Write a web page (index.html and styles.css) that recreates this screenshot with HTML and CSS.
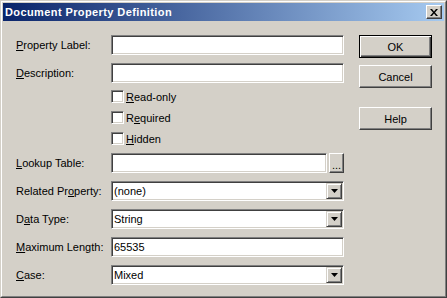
FILE: index.html
```html
<!DOCTYPE html>
<html lang="en">
<head>
  <meta charset="UTF-8">
  <title>Document Property Definition</title>
  <link rel="stylesheet" href="styles.css">
</head>
<body>
<div class="window">
  <div class="window-inner">
    <div class="titlebar">
      <span class="title">Document Property Definition</span>
      <div class="close">
        <svg width="8" height="7" viewBox="0 0 8 7"><path d="M0 0h2l2 2.5L6 0h2L5 3.5 8 7H6L4 4.5 2 7H0l3-3.5z" fill="#000"/></svg>
      </div>
    </div>
    <div class="client">
      <div class="form">
        <div class="row">
          <span class="label"><u>P</u>roperty Label:</span>
          <div class="field"></div>
        </div>
        <div class="row">
          <span class="label"><u>D</u>escription:</span>
          <div class="field"></div>
        </div>
        <div class="check-row first">
          <span class="check"></span><span><u>R</u>ead-only</span>
        </div>
        <div class="check-row">
          <span class="check"></span><span>R<u>e</u>quired</span>
        </div>
        <div class="check-row">
          <span class="check"></span><span><u>H</u>idden</span>
        </div>
        <div class="row">
          <span class="label"><u>L</u>ookup Table:</span>
          <div class="lookup">
            <div class="field short"></div>
            <div class="dots">...</div>
          </div>
        </div>
        <div class="row">
          <span class="label">Related Pr<u>o</u>perty:</span>
          <div class="field combo"><span class="value">(none)</span><span class="drop"><svg width="7" height="4" viewBox="0 0 7 4"><path d="M0 0h7L3.5 4z" fill="#000"/></svg></span></div>
        </div>
        <div class="row">
          <span class="label">D<u>a</u>ta Type:</span>
          <div class="field combo"><span class="value">String</span><span class="drop"><svg width="7" height="4" viewBox="0 0 7 4"><path d="M0 0h7L3.5 4z" fill="#000"/></svg></span></div>
        </div>
        <div class="row">
          <span class="label"><u>M</u>aximum Length:</span>
          <div class="field"><span class="value">65535</span></div>
        </div>
        <div class="row">
          <span class="label"><u>C</u>ase:</span>
          <div class="field combo"><span class="value">Mixed</span><span class="drop"><svg width="7" height="4" viewBox="0 0 7 4"><path d="M0 0h7L3.5 4z" fill="#000"/></svg></span></div>
        </div>
      </div>
      <div class="buttons">
        <div class="btn default"><span>OK</span></div>
        <div class="btn">Cancel</div>
        <div class="btn help">Help</div>
      </div>
    </div>
  </div>
</div>
</body>
</html>
```

FILE: styles.css
```css
html, body {
  margin: 0;
  background-color: #d4d0c8;
}
body {
  font-family: "Liberation Sans", Arial, sans-serif;
  font-size: 11px;
  color: #000;
}
.window {
  width: 447px;
  height: 298px;
  box-sizing: border-box;
  border: 1px solid;
  border-color: #d4d0c8 #404040 #404040 #d4d0c8;
  display: flex;
  flex-direction: column;
}
.window-inner {
  flex: 1;
  border: 1px solid;
  border-color: #fff #808080 #808080 #fff;
  padding: 1px;
  display: flex;
  flex-direction: column;
}
.titlebar {
  height: 18px;
  flex: none;
  padding: 0 2px;
  display: flex;
  align-items: center;
  justify-content: space-between;
  background: linear-gradient(to right, #0a246a, #a6caf0);
  color: #fff;
  font-weight: bold;
  font-size: 11px;
  letter-spacing: 0.4px;
}
.close {
  width: 16px;
  height: 14px;
  box-sizing: border-box;
  background-color: #d4d0c8;
  border: 1px solid;
  border-color: #fff #404040 #404040 #fff;
  box-shadow: inset -1px -1px #808080;
  display: flex;
  align-items: center;
  justify-content: center;
}
.client {
  flex: 1;
  display: flex;
  gap: 15px;
  padding: 14px 11px 0 13px;
}
.form {
  width: 328px;
  display: flex;
  flex-direction: column;
  gap: 8px;
}
.row {
  height: 20px;
  display: flex;
  align-items: center;
}
.label {
  width: 95px;
  flex: none;
}
.field {
  width: 233px;
  height: 20px;
  box-sizing: border-box;
  background-color: #fff;
  border: 1px solid;
  border-color: #808080 #fff #fff #808080;
  box-shadow: inset 1px 1px #404040, inset -1px -1px #d4d0c8;
  display: flex;
  align-items: center;
  padding: 0 1px 0 2px;
}
.field.short {
  width: 216px;
}
.lookup {
  display: flex;
  gap: 2px;
}
.dots {
  width: 15px;
  height: 20px;
  box-sizing: border-box;
  border: 1px solid;
  border-color: #fff #404040 #404040 #fff;
  box-shadow: inset -1px -1px #808080;
  text-align: center;
  line-height: 22px;
  font-size: 11px;
}
.combo .value {
  flex: 1;
}
.drop {
  width: 16px;
  height: 16px;
  box-sizing: border-box;
  background-color: #d4d0c8;
  border: 1px solid;
  border-color: #d4d0c8 #404040 #404040 #d4d0c8;
  box-shadow: inset 1px 1px #fff, inset -1px -1px #808080;
  display: flex;
  align-items: center;
  justify-content: center;
}
.check-row {
  height: 13px;
  padding-left: 95px;
  display: flex;
  align-items: center;
  gap: 2px;
}
.check-row.first {
  margin-top: -1px;
}
.check {
  width: 13px;
  height: 13px;
  box-sizing: border-box;
  background-color: #fff;
  border: 1px solid;
  border-color: #808080 #fff #fff #808080;
  box-shadow: inset 1px 1px #404040, inset -1px -1px #d4d0c8;
}
.buttons {
  width: 73px;
  display: flex;
  flex-direction: column;
  gap: 7px;
}
.btn {
  height: 23px;
  box-sizing: border-box;
  border: 1px solid;
  border-color: #fff #404040 #404040 #fff;
  box-shadow: inset -1px -1px #808080;
  display: flex;
  align-items: center;
  justify-content: center;
}
.btn.default {
  border: 1px solid #000;
  box-shadow: inset 1px 1px #fff, inset -1px -1px #404040, inset -2px -2px #808080;
}
.btn.help {
  margin-top: 12px;
}
```
